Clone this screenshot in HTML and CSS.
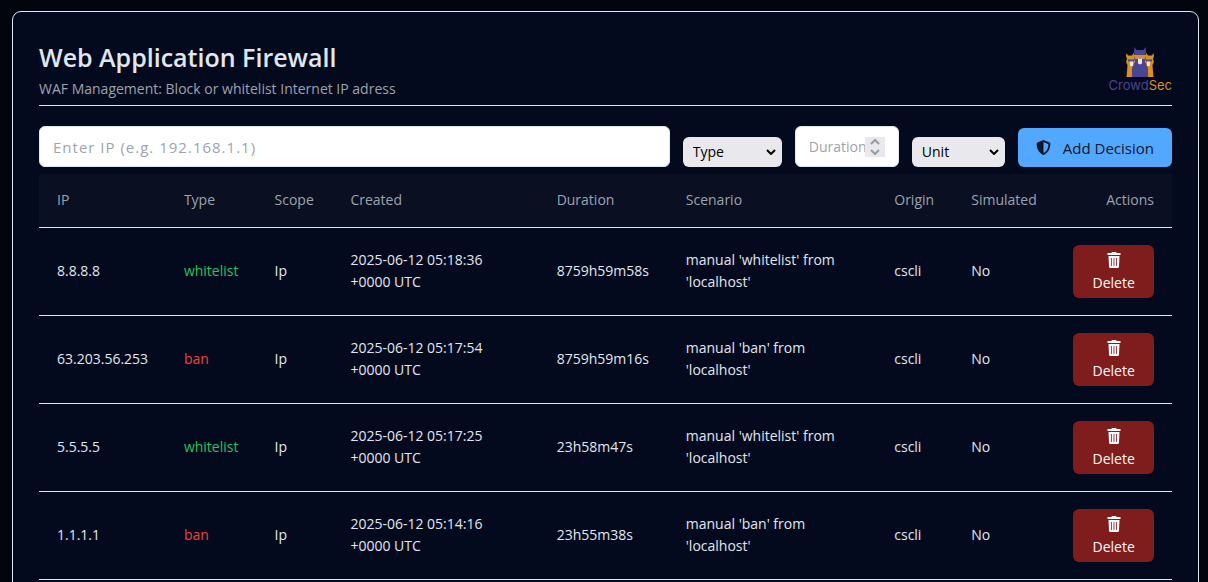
FILE: index.html
```html
<!DOCTYPE html>
<html lang="en">
    <head>
        <meta charset="UTF-8" />
        <meta name="viewport" content="width=device-width, initial-scale=1.0" />
        <title>Web Application Firewall</title>

        <link rel="stylesheet" href="styles.css">
    </head>

    <body>
        <!-- shared icons -->
        <svg class="sprite" xmlns="http://www.w3.org/2000/svg">
            <symbol id="trash" viewBox="0 0 14 16">
                <path
                    fill-rule="evenodd"
                    d="M5 0h4l.6 1H13.500v2H.5V1h3.900zM1.500 4h11l-.5 10.500a1.500 1.500 0 0 1-1.500 1.500h-7A1.500 1.500 0 0 1 2 14.500zM4 6v8h.8V6zM6.600 6v8h.8V6zM9.200 6v8h.8V6z"
                />
            </symbol>
        </svg>

        <main class="card">
            <header class="card-header">
                <div>
                    <h1>Web Application Firewall</h1>
                    <p>WAF Management: Block or whitelist Internet IP adress</p>
                </div>

                <div class="logo">
                    <svg viewBox="0 0 30 30" width="30" height="30">
                        <!-- side llamas -->
                        <path fill="#d8901f" d="M1.500 6l1.500 2.500h4L8.500 6 10 9v21H1.500l1-12L1 15l1-3-1-3z" />
                        <path fill="#d8901f" d="M28.500 6L27 8.500h-4L21.500 6 20 9v21h8.500l-1-12 1.500-3-1-3 1-3z" />
                        <path fill="#4a4593" d="M3 12.500h6v2H3zM21 12.500h6v2h-6z" />
                        <path fill="#e8e4ec" d="M5 14.500h3V19H5zM22 14.500h3V19h-3z" />
                        <!-- middle llama -->
                        <path fill="#4a4593" d="M9.500 0l2 3h7l2-3 .5 5-.8 3 .8 3-1 4 3 6v9H7v-9l3-6-1-4 .8-3L9 5z" />
                        <path fill="#d8901f" d="M9 8h12l-1 4h-3.500L15 10.500 13.500 12H10z" />
                        <path fill="#e8e4ec" d="M13 11.500h4v5l-2 1-2-1z" />
                    </svg>
                    <span class="logo-text">Crowd<b>Sec</b></span>
                </div>
            </header>

            <form class="decision-form">
                <input class="field ip" type="text" placeholder="Enter IP (e.g. 192.168.1.1)" aria-label="IP" />

                <select class="select type" aria-label="Type">
                    <option>Type</option>
                    <option>ban</option>
                    <option>whitelist</option>
                </select>

                <div class="duration">
                    <input class="field" type="number" min="1" placeholder="Duration" aria-label="Duration" />
                    <span class="spinner">
                        <svg viewBox="0 0 20 20" width="20" height="20">
                            <path d="M6 7l4-4 4 4M6 13l4 4 4-4" />
                        </svg>
                    </span>
                </div>

                <select class="select unit" aria-label="Unit">
                    <option>Unit</option>
                    <option>h</option>
                    <option>m</option>
                    <option>s</option>
                </select>

                <button class="add" type="button">
                    <svg viewBox="0 0 16 16" width="15" height="15">
                        <path
                            fill-rule="evenodd"
                            d="M8 0l6.500 2.700q.8.300.8 1.200C15.300 9 13 13.800 8 16 3 13.800.7 9 .7 3.900q0-.9.8-1.200zM8 2.200v11.600c3.500-1.900 5.200-5.400 5.300-9.400z"
                        />
                    </svg>
                    Add Decision
                </button>
            </form>

            <table>
                <colgroup>
                    <col class="col-ip" />
                    <col class="col-type" />
                    <col class="col-scope" />
                    <col class="col-created" />
                    <col class="col-duration" />
                    <col class="col-scenario" />
                    <col class="col-origin" />
                    <col class="col-simulated" />
                    <col class="col-actions" />
                </colgroup>
                <thead>
                    <tr>
                        <th>IP</th>
                        <th>Type</th>
                        <th>Scope</th>
                        <th>Created</th>
                        <th>Duration</th>
                        <th>Scenario</th>
                        <th>Origin</th>
                        <th>Simulated</th>
                        <th class="actions">Actions</th>
                    </tr>
                </thead>
                <tbody>
                    <tr>
                        <td>8.8.8.8</td>
                        <td class="whitelist">whitelist</td>
                        <td>Ip</td>
                        <td>2025-06-12 05:18:36 +0000 UTC</td>
                        <td>8759h59m58s</td>
                        <td>manual 'whitelist' from 'localhost'</td>
                        <td>cscli</td>
                        <td>No</td>
                        <td class="actions">
                            <button class="delete" type="button"><svg><use href="#trash" /></svg>Delete</button>
                        </td>
                    </tr>
                    <tr>
                        <td>63.203.56.253</td>
                        <td class="ban">ban</td>
                        <td>Ip</td>
                        <td>2025-06-12 05:17:54 +0000 UTC</td>
                        <td>8759h59m16s</td>
                        <td>manual 'ban' from 'localhost'</td>
                        <td>cscli</td>
                        <td>No</td>
                        <td class="actions">
                            <button class="delete" type="button"><svg><use href="#trash" /></svg>Delete</button>
                        </td>
                    </tr>
                    <tr>
                        <td>5.5.5.5</td>
                        <td class="whitelist">whitelist</td>
                        <td>Ip</td>
                        <td>2025-06-12 05:17:25 +0000 UTC</td>
                        <td>23h58m47s</td>
                        <td>manual 'whitelist' from 'localhost'</td>
                        <td>cscli</td>
                        <td>No</td>
                        <td class="actions">
                            <button class="delete" type="button"><svg><use href="#trash" /></svg>Delete</button>
                        </td>
                    </tr>
                    <tr>
                        <td>1.1.1.1</td>
                        <td class="ban">ban</td>
                        <td>Ip</td>
                        <td>2025-06-12 05:14:16 +0000 UTC</td>
                        <td>23h55m38s</td>
                        <td>manual 'ban' from 'localhost'</td>
                        <td>cscli</td>
                        <td>No</td>
                        <td class="actions">
                            <button class="delete" type="button"><svg><use href="#trash" /></svg>Delete</button>
                        </td>
                    </tr>
                </tbody>
            </table>
        </main>
    </body>
</html>
```
FILE: styles.css
```css
* {
    margin: 0;
    padding: 0;
    box-sizing: border-box;
}

body {
    padding: 11px 9px 11px 12px;
    background-color: #02050e;
    color: #e1e7ef;
    font-family: "Open Sans", "Noto Sans", sans-serif;
    font-size: 14px;
    line-height: 22px;
}

input,
select,
button {
    font: inherit;
    border: none;
    border-radius: 6px;
}

.sprite {
    display: none;
}

.card {
    padding: 26px;
    background-color: #040a1d;
    border: 1px solid #e1e7ef;
    border-radius: 9px;
}

.card-header {
    display: flex;
    justify-content: space-between;
    align-items: flex-end;
    height: 68px;
    padding-bottom: 5px;
    border-bottom: 1px solid #e1e7ef;
}

h1 {
    font-size: 25px;
    font-weight: 600;
    line-height: 36px;
    margin-bottom: 3px;
}

.card-header p {
    color: #9ca3af;
}

.logo {
    display: flex;
    flex-direction: column;
    align-items: center;
    padding-bottom: 7px;
}

.logo-text {
    color: #4a4593;
    font-family: Inter, sans-serif;
    font-size: 13px;
    line-height: 16px;
}

.logo-text b {
    color: #d8901f;
    font-weight: 400;
}

.decision-form {
    display: flex;
    align-items: flex-end;
    gap: 13px;
    margin: 20px 0 7px;
}

.field {
    height: 41px;
    padding: 0 13px;
    background-color: #fff;
    border: 1px solid #e1e7ef;
    color: #111827;
}

.field::placeholder {
    color: #9ca3af;
}

.ip {
    flex: 1;
    min-width: 0;
    font-size: 15px;
    letter-spacing: 1px;
}

.duration {
    position: relative;
    width: 104px;
}

.duration .field {
    display: block;
    width: 100%;
    padding-right: 33px;
    appearance: textfield;
}

.duration .field::-webkit-inner-spin-button {
    display: none;
}

.spinner {
    position: absolute;
    top: 11px;
    right: 14px;
    width: 20px;
    height: 20px;
    background-color: #e9e9ed;
}

.spinner svg {
    display: block;
    fill: none;
    stroke: #9a9aa2;
    stroke-width: 2;
}

.select {
    height: 30px;
    padding: 0 10px;
    appearance: none;
    background: #e9e9ed url("data:image/svg+xml,%3Csvg xmlns='http://www.w3.org/2000/svg' width='10' height='6' fill='none' stroke='%23000' stroke-width='2'%3E%3Cpath d='M1 1l4 4 4-4'/%3E%3C/svg%3E") no-repeat right 6px center;
    color: #000;
}

.type {
    width: 99px;
}

.unit {
    width: 93px;
}

.add {
    display: flex;
    align-items: center;
    gap: 12px;
    height: 39px;
    padding: 0 18px;
    background-color: #52a8ff;
    color: #0f172a;
    font-size: 15px;
    cursor: pointer;
}

.add svg {
    fill: #0f172a;
}

table {
    width: 100%;
    table-layout: fixed;
    border-collapse: collapse;
}

.col-ip {
    width: 11.2%;
}

.col-type {
    width: 8%;
}

.col-scope {
    width: 6.7%;
}

.col-created {
    width: 18.2%;
}

.col-duration {
    width: 11.4%;
}

.col-scenario {
    width: 18.4%;
}

.col-origin {
    width: 6.8%;
}

.col-simulated {
    width: 9%;
}

.col-actions {
    width: 10.3%;
}

tr {
    border-bottom: 1px solid #e1e7ef;
}

th,
td {
    padding: 0 18px;
    text-align: left;
    vertical-align: middle;
}

th {
    height: 53px;
    background-color: #0a1022;
    color: #9ca3af;
    font-weight: 400;
}

td {
    height: 88px;
}

.actions {
    text-align: right;
}

.whitelist {
    color: #22c55e;
}

.ban {
    color: #ef4444;
}

.delete {
    width: 100%;
    padding: 7px 0 4px;
    background-color: #7f1d1d;
    color: #f8fafc;
    cursor: pointer;
}

.delete svg {
    display: block;
    width: 14px;
    height: 16px;
    margin: 0 auto 4px;
    fill: #f8fafc;
}
```
